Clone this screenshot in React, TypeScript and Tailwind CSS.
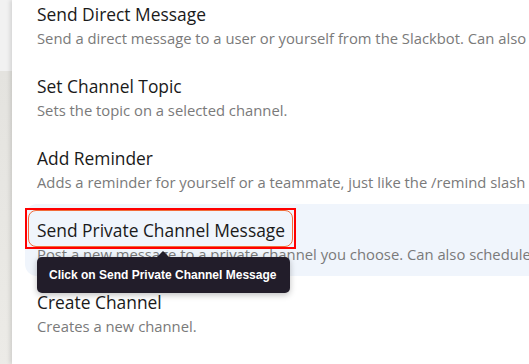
const rows = [
  { title: "Send Direct Message", desc: "Send a direct message to a user or yourself from the Slackbot. Can also schedule messages." },
  { title: "Set Channel Topic", desc: "Sets the topic on a selected channel." },
  { title: "Add Reminder", desc: "Adds a reminder for yourself or a teammate, just like the /remind slash command." },
  { title: "Send Private Channel Message", desc: "Post a new message to a private channel you choose. Can also schedule messages.", active: true },
  { title: "Create Channel", desc: "Creates a new channel." },
];

export default function App() {
  return (
    <div className="flex h-[364px] w-[529px] overflow-hidden bg-white font-['Open_Sans',sans-serif]">
      {/* left backdrop strip */}
      <div className="flex w-[12px] shrink-0 flex-col">
        <div className="h-[71px] bg-[#f1f1f1]" />
        <div className="flex-1 bg-gradient-to-b from-[#e4e3df] to-[#ecebe7]" />
      </div>

      <div className="relative flex-1 overflow-hidden bg-white shadow-[-2px_0_4px_rgba(0,0,0,0.12)]">
        <div className="mt-[-12px] flex flex-col">
          {rows.map((r) => (
            <div
              key={r.title}
              className={`relative ml-[13px] h-[72px] pl-[12px] pt-[14px] ${
                r.active ? "rounded-l-[12px] bg-[#f0f5fc]" : ""
              }`}
            >
              <div className="whitespace-nowrap text-[17.4px] leading-[24px] text-[#1a1a1a]">{r.title}</div>
              <div className="mt-[2px] whitespace-nowrap text-[14.8px] leading-[20px] text-[#7a7a7a]">{r.desc}</div>

              {r.active && (
                <>
                  <div className="absolute left-[3px] top-[6px] h-[37px] w-[265px] rounded-[8px] border-[1.5px] border-[#f26b3a]" />
                  <div className="absolute left-0 top-[4px] h-[41px] w-[271px] border-2 border-[#ff0000]" />
                  <div className="absolute left-[12px] top-[53px] z-10 flex h-[36px] w-[253px] items-center rounded-[5px] bg-[#221d2a] pl-[12px] font-['Liberation_Sans',Arial,sans-serif] text-[12px] font-bold text-white shadow-[0_2px_6px_rgba(0,0,0,0.25)]">
                    <div className="absolute left-[120px] top-[-6px] h-0 w-0 border-x-[6px] border-b-[6px] border-x-transparent border-b-[#221d2a]" />
                    Click on Send Private Channel Message
                  </div>
                </>
              )}
            </div>
          ))}
        </div>
      </div>
    </div>
  );
}
